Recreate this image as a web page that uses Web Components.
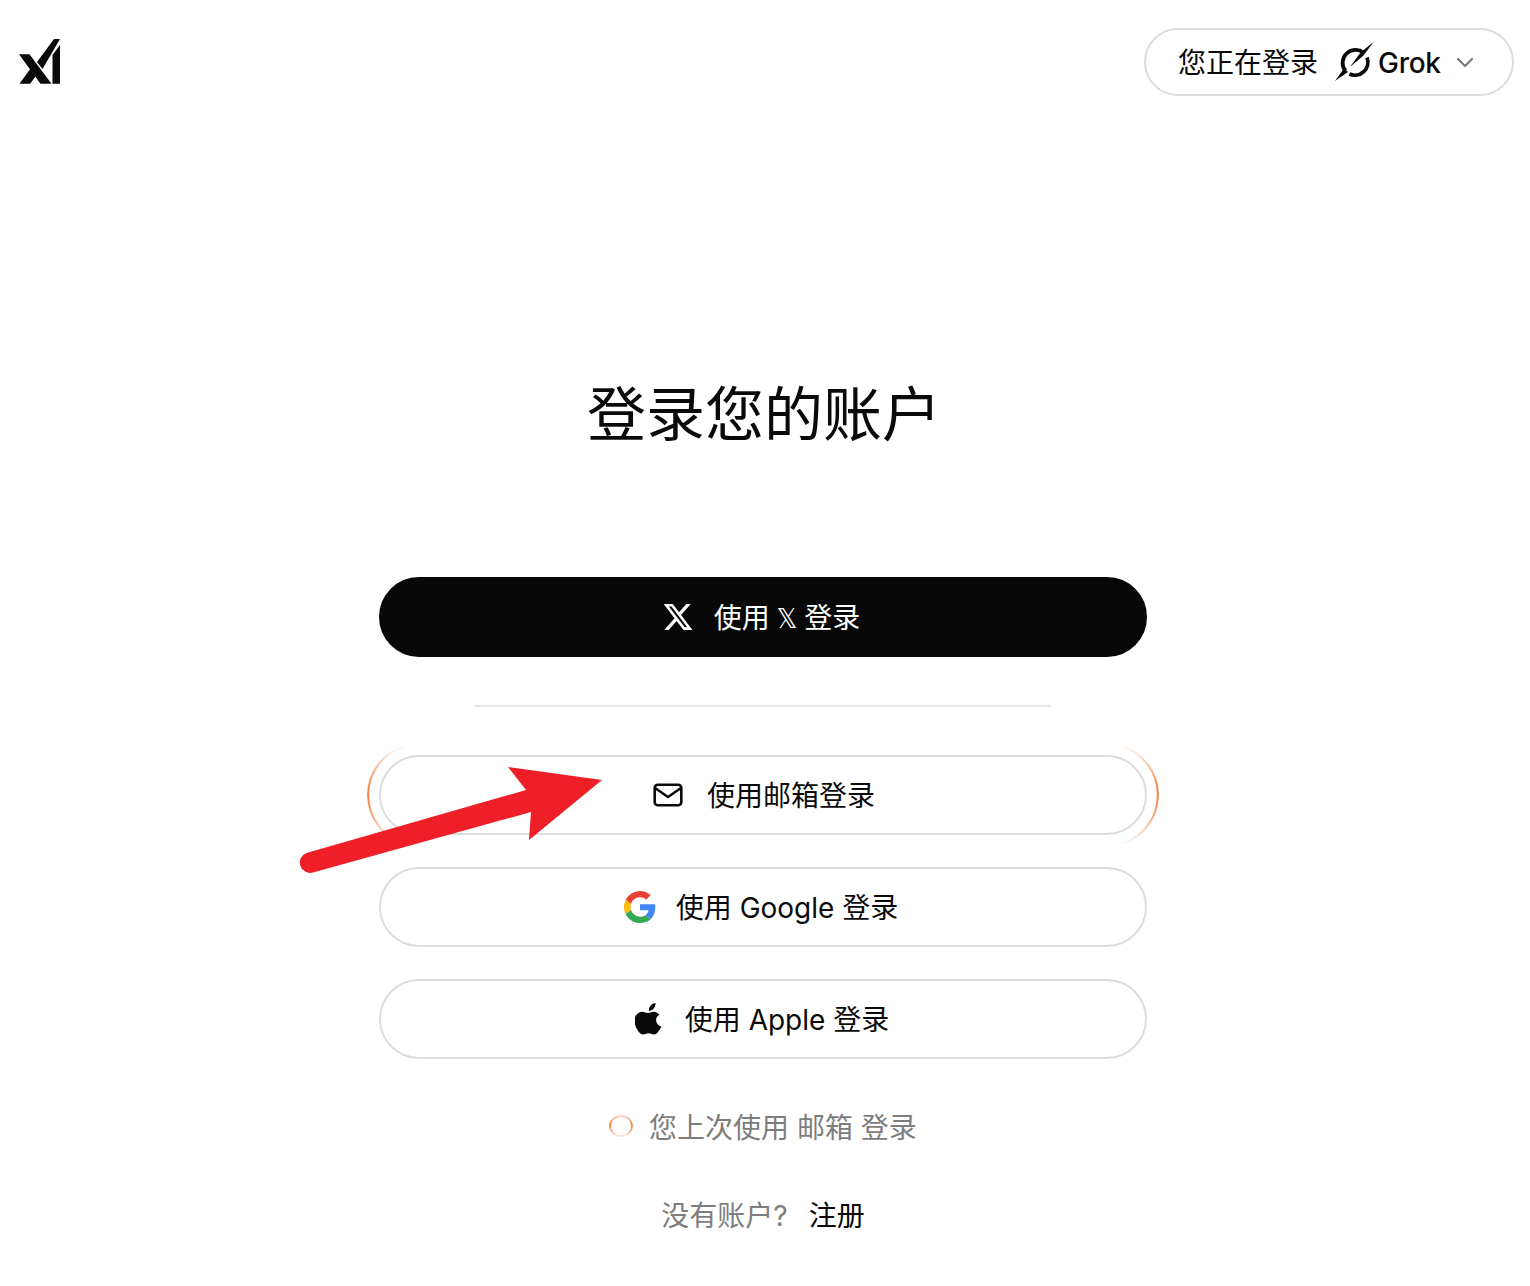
<!DOCTYPE html>
<html lang="zh-CN"><head><meta charset="utf-8"><title>登录</title>
<style>
html,body{margin:0;background:#fff}
body{font-family:Inter,"Noto Sans CJK SC",sans-serif;color:#0a0a0a;position:relative;width:1530px;height:1286px;overflow:hidden}
</style></head><body>
<login-page></login-page>
<script>
const GRAD=(id)=>`<linearGradient id="${id}" gradientUnits="userSpaceOnUse" x1="0" y1="4" x2="0" y2="104"><stop offset="0" stop-color="#f0803c" stop-opacity="0"/><stop offset=".35" stop-color="#f0803c" stop-opacity=".8"/><stop offset=".5" stop-color="#f0803c"/><stop offset=".65" stop-color="#f0803c" stop-opacity=".8"/><stop offset="1" stop-color="#f0803c" stop-opacity="0"/></linearGradient>`;
const icons={
 logo:`<svg width="42" height="46" viewBox="19 39 42 46" fill="#0a0a0a"><path d="M19 54.300h10.500L51.500 83.800H40.500z"/><path d="M19.500 83.800h10.600l5.400-7.400-5.300-7.500z"/><path d="M37 62 54 39h6L42.500 69z"/><path d="M52.500 83.800H60V45l-7.500 10z"/></svg>`,
 grok:`<svg width="44" height="44" viewBox="0 0 44 44" fill="none"><path d="M30.500 12.500A13 13 0 0 0 12.500 31" stroke="#0a0a0a" stroke-width="3.800"/><path d="M34 17.500A13 13 0 0 1 16.500 34" stroke="#0a0a0a" stroke-width="3.800"/><path d="M40.500 2 30.500 15.500 17 27 27.500 12.500z" fill="#0a0a0a"/><path d="M2 41 11 28.500 15 32z" fill="#0a0a0a"/></svg>`,
 chev:`<svg width="18" height="11" viewBox="0 0 18 11" fill="none"><path d="M2 2l7 7 7-7" stroke="#7a7a7a" stroke-width="2.200" stroke-linecap="round" stroke-linejoin="round"/></svg>`,
 x:`<svg width="32" height="32" viewBox="0 0 24 24" fill="#fff"><path d="M18.244 2.250h3.308l-7.227 8.260 8.502 11.240H16.170l-5.214-6.817L4.990 21.750H1.680l7.730-8.835L1.254 2.250H8.080l4.713 6.231zm-1.161 17.520h1.833L7.084 4.126H5.117z"/></svg>`,
 mail:`<svg width="30" height="24" viewBox="0 0 30 24" fill="none" stroke="#0a0a0a" stroke-width="2.600" stroke-linejoin="round"><rect x="1.700" y="1.700" width="26.600" height="20.600" rx="3"/><path d="M2 5l13 9 13-9"/></svg>`,
 google:`<svg width="32" height="32" viewBox="0 0 48 48"><path fill="#EA4335" d="M24 9.500c3.540 0 6.710 1.220 9.210 3.600l6.850-6.850C35.900 2.380 30.470 0 24 0 14.620 0 6.510 5.380 2.560 13.220l7.980 6.190C12.430 13.720 17.740 9.500 24 9.500z"/><path fill="#4285F4" d="M46.980 24.550c0-1.570-.15-3.090-.38-4.550H24v9.020h12.940c-.58 2.960-2.260 5.480-4.780 7.180l7.730 6c4.510-4.180 7.090-10.360 7.090-17.650z"/><path fill="#FBBC05" d="M10.530 28.590c-.48-1.450-.76-2.990-.76-4.590s.27-3.140.76-4.590l-7.980-6.190C.92 16.460 0 20.120 0 24c0 3.880.92 7.540 2.560 10.780l7.970-6.190z"/><path fill="#34A853" d="M24 48c6.480 0 11.930-2.130 15.890-5.810l-7.730-6c-2.150 1.450-4.920 2.300-8.160 2.300-6.260 0-11.570-4.220-13.470-9.910l-7.980 6.190C6.510 42.620 14.620 48 24 48z"/></svg>`,
 apple:`<svg width="29" height="34" viewBox="0 0 24 28" fill="#0a0a0a"><path d="M17 .8c.1 1.800-.5 3.300-1.500 4.500-1 1.200-2.500 2-4 1.900-.2-1.600.5-3.200 1.500-4.300C14 1.800 15.600.9 17 .8z"/><path d="M21.800 20.300c-.6 1.300-.9 1.900-1.700 3-1.100 1.600-2.600 3.600-4.500 3.600-1.700 0-2.100-1.100-4.400-1.100-2.300 0-2.800 1.100-4.500 1.100-1.900 0-3.300-1.800-4.400-3.400C-.8 19.100-1.100 13.800.7 11c1.300-1.900 3.300-3.100 5.200-3.100 1.900 0 3.200 1.100 4.700 1.100 1.500 0 2.400-1.100 4.800-1.100 1.700 0 3.500.9 4.800 2.500-4.200 2.300-3.500 8.300 1.600 9.900z"/></svg>`,
 ringL:`<svg width="56" height="108" viewBox="0 0 56 108" fill="none"><defs>${GRAD('gl')}</defs><path d="M40 5A51 51 0 0 0 40 103" stroke="url(#gl)" stroke-width="2"/></svg>`,
 ringR:`<svg width="56" height="108" viewBox="0 0 56 108" fill="none"><defs>${GRAD('gr')}</defs><path d="M16 5A51 51 0 0 1 16 103" stroke="url(#gr)" stroke-width="2"/></svg>`,
 dot:`<svg width="24" height="24" viewBox="0 0 24 24" fill="none"><defs><linearGradient id="gd" x1="0" y1="0" x2="0" y2="1"><stop offset="0" stop-color="#f0803c" stop-opacity=".3"/><stop offset=".45" stop-color="#f0803c"/><stop offset="1" stop-color="#f0803c" stop-opacity=".2"/></linearGradient></defs><ellipse cx="12" cy="12" rx="11" ry="10" stroke="url(#gd)" stroke-width="1.800"/></svg>`,
 arrow:`<svg width="320" height="120" viewBox="0 0 320 120"><path fill="#ee1f27" d="M228 30 210 7l94 13-73 60 2-28L15 112.500A10.300 10.300 0 0 1 9.300 92.700z"/></svg>`
};
const def=(n,css,html)=>customElements.define(n,class extends HTMLElement{constructor(){super();const r=this.attachShadow({mode:'open'});r.innerHTML=`<style>${css}</style>${html}`}});

def('x-product-pill',`:host{display:flex;align-items:center;box-sizing:border-box;width:370px;height:68px;border:2px solid #dcdcdc;border-radius:34px;padding:0 40px 0 32px;font-size:28px;color:#0a0a0a;white-space:nowrap}
.t{font-family:"Noto Sans CJK SC",sans-serif;font-weight:400;margin-top:-2px}
.g{display:flex;margin-left:15px}
.n{font-family:Inter,sans-serif;font-weight:500;letter-spacing:-.3px;margin:2px 0 0 1px;font-size:28px}
.c{display:flex;margin-left:15px}`,
`<span class="t">您正在登录</span><span class="g">${icons.grok}</span><span class="n">Grok</span><span class="c">${icons.chev}</span>`);

def('x-header',`:host{display:flex;justify-content:space-between;align-items:flex-start;box-sizing:border-box;height:96px;padding:28px 16px 0 19px}
.l{display:flex;margin-top:11px}`,`<span class="l">${icons.logo}</span><slot></slot>`);

def('x-auth-button',`:host{display:flex;position:relative;box-sizing:border-box;height:80px;width:768px;border-radius:40px;border:2px solid #dcdcdc;background:#fff;align-items:center;justify-content:center;gap:var(--gap,24px);font:400 28px Inter,"Noto Sans CJK SC",sans-serif;color:#0a0a0a;white-space:nowrap;padding:0 var(--pr,0px) 0 var(--pl,0px)}
:host([dark]){background:#080808;border-color:#080808;color:#fff}
.i{display:flex}.t{margin-top:-2px}`,
`<span class="i"><slot name="icon"></slot></span><span class="t"><slot></slot></span>`);

def('x-auth-ring',`:host{display:block;position:relative}
.a{position:absolute;top:-14px;display:flex;pointer-events:none}.l{left:-14px}.r{right:-14px}`,
`<slot></slot><span class="a l">${icons.ringL}</span><span class="a r">${icons.ringR}</span>`);

def('x-last-used',`:host{display:flex;align-items:center;justify-content:center;gap:16px;height:40px;font:400 28px Inter,"Noto Sans CJK SC",sans-serif;color:#7d7d7d;white-space:nowrap}
.d{display:flex}`,`<span class="d">${icons.dot}</span><span><slot></slot></span>`);

def('x-signup',`:host{display:flex;justify-content:center;gap:21px;font:400 28px Inter,"Noto Sans CJK SC",sans-serif;color:#7d7d7d;white-space:nowrap}
b{font-weight:400;color:#0a0a0a}`,`<span>没有账户?</span><b>注册</b>`);

def('x-login-card',`:host{display:flex;flex-direction:column;align-items:center;width:768px;margin:0 0 0 379px}
h1{margin:0 0 116px;padding-left:2px;height:100px;font:400 59px/100px "Noto Sans CJK SC",sans-serif;color:#0a0a0a;text-align:center}
.stack{display:flex;flex-direction:column;gap:32px}
hr{width:576px;height:2px;margin:48px auto;border:0;background:#e6e6e6}`,
`<h1>登录您的账户</h1><slot name="primary"></slot><hr><div class="stack"><slot name="methods"></slot></div><slot name="foot"></slot>`);

def('login-page',`:host{display:block}
main{padding-top:265px;display:block}
.x,.g,.a,.m{display:flex}
.arrow{position:absolute;left:298px;top:760px;display:flex}
.dbl{font-family:"DejaVu Sans",sans-serif;font-weight:400;font-size:26px;margin:0 -1px}
x-last-used{margin-top:47px}x-signup{margin-top:48px}`,
`<x-header><x-product-pill></x-product-pill></x-header>
<main><x-login-card>
<x-auth-button slot="primary" dark style="--gap:20px;--pr:4px"><span slot="icon" class="x">${icons.x}</span>使用 <span class="dbl">𝕏</span> 登录</x-auth-button>
<x-auth-ring slot="methods"><x-auth-button style="--gap:24px;--pl:2px"><span slot="icon" class="m">${icons.mail}</span>使用邮箱登录</x-auth-button></x-auth-ring>
<x-auth-button slot="methods" style="--gap:20px;--pr:4px"><span slot="icon" class="g">${icons.google}</span>使用 Google 登录</x-auth-button>
<x-auth-button slot="methods" style="--gap:21px;--pr:2px"><span slot="icon" class="a">${icons.apple}</span>使用 Apple 登录</x-auth-button>
<x-last-used slot="foot">您上次使用 邮箱 登录</x-last-used>
<x-signup slot="foot"></x-signup>
</x-login-card></main>
<span class="arrow">${icons.arrow}</span>`);
</script></body></html>
